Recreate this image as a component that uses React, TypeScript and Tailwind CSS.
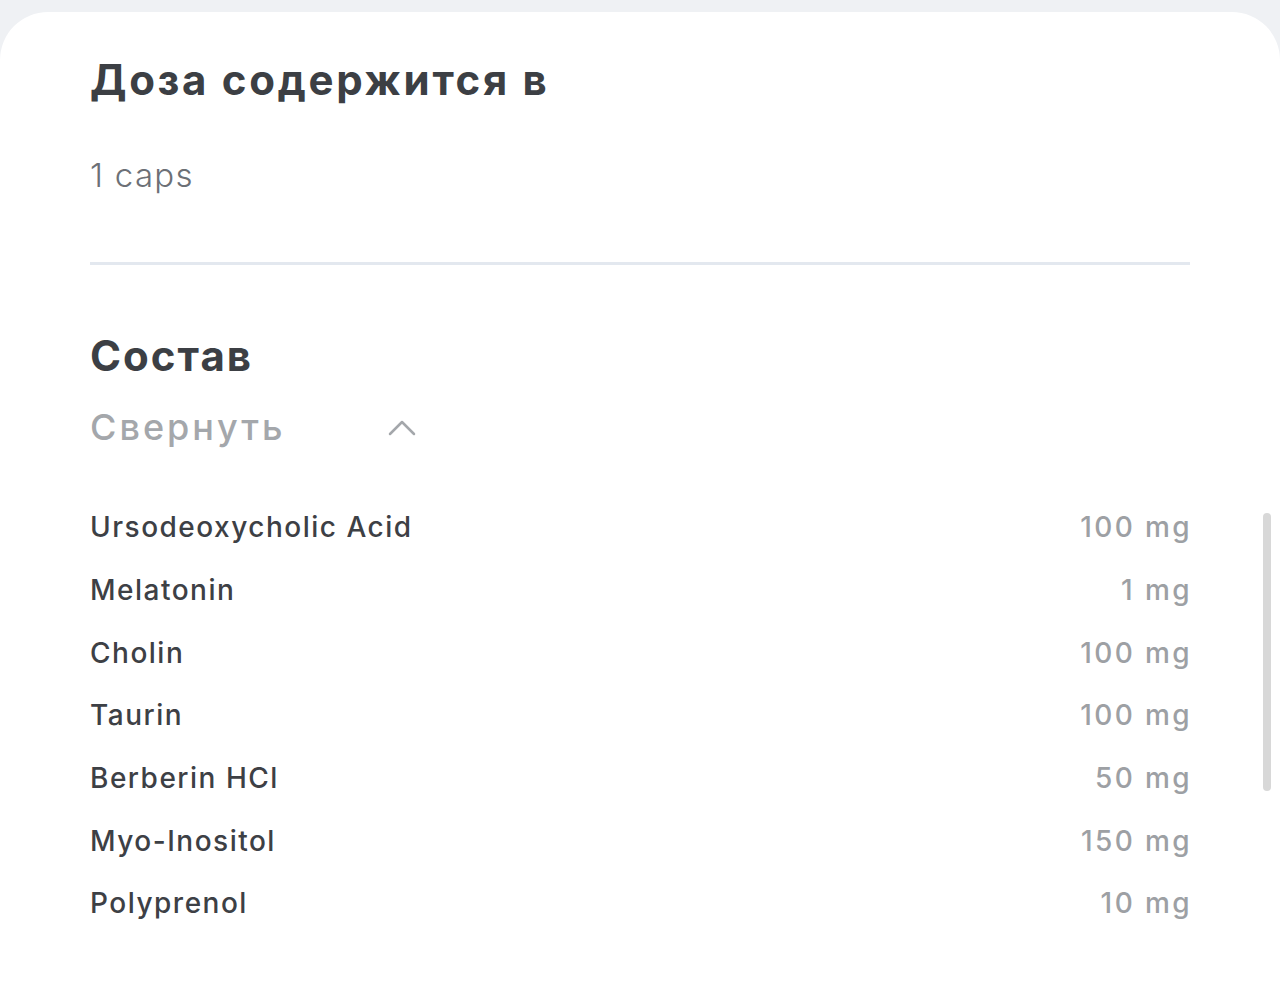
import React from "react";

const rows: [string, string][] = [
  ["Ursodeoxycholic Acid", "100 mg"],
  ["Melatonin", "1 mg"],
  ["Cholin", "100 mg"],
  ["Taurin", "100 mg"],
  ["Berberin HCl", "50 mg"],
  ["Myo-Inositol", "150 mg"],
  ["Polyprenol", "10 mg"],
];

export default function App() {
  return (
    <div
      className="w-[1280px] h-[1000px] overflow-hidden bg-[#eff1f4] pt-3"
      style={{ fontFamily: "Inter, 'Noto Sans', sans-serif" }}
    >
      <div className="relative h-[988px] rounded-t-[48px] bg-white px-[90px] pt-[43px]">
        <h1 className="text-[42px] leading-[50px] font-bold text-[#3c3f44] tracking-[2.7px]">
          Доза содержится в
        </h1>
        <div className="mt-[50px] text-[33px] leading-[40px] font-light text-[#6c7076] tracking-[1.3px]">
          1 caps
        </div>
        <div className="mt-[67px] h-[3px] bg-[#e3e8ef]" />
        <h2 className="mt-[66px] text-[42px] leading-[50px] font-bold text-[#3c3f44] tracking-[2px]">
          Состав
        </h2>
        <div className="mt-[22px] flex items-center h-[48px]">
          <span className="text-[36px] leading-[48px] font-medium text-[#a4a7ab] tracking-[3px] w-[298px]">
            Свернуть
          </span>
          <svg width="28" height="18" viewBox="0 0 28 18" fill="none">
            <path d="M2 16 L14 4 L26 16" stroke="#a4a7ab" strokeWidth="2.5" strokeLinecap="round" strokeLinejoin="round" />
          </svg>
        </div>
        <div className="mt-[45px] flex flex-col">
          {rows.map(([n, v]) => (
            <div key={n} className="h-[62.7px] flex items-center justify-between text-[28px]">
              <span className="text-[#3d4045] font-medium tracking-[1.5px]">{n}</span>
              <span className="text-[#9da0a4] font-medium tracking-[2.4px] -mr-[2px]">{v}</span>
            </div>
          ))}
        </div>
        <div className="absolute right-[9px] top-[501px] w-[8px] h-[278px] rounded-full bg-[#d8d8d8]" />
      </div>
    </div>
  );
}
